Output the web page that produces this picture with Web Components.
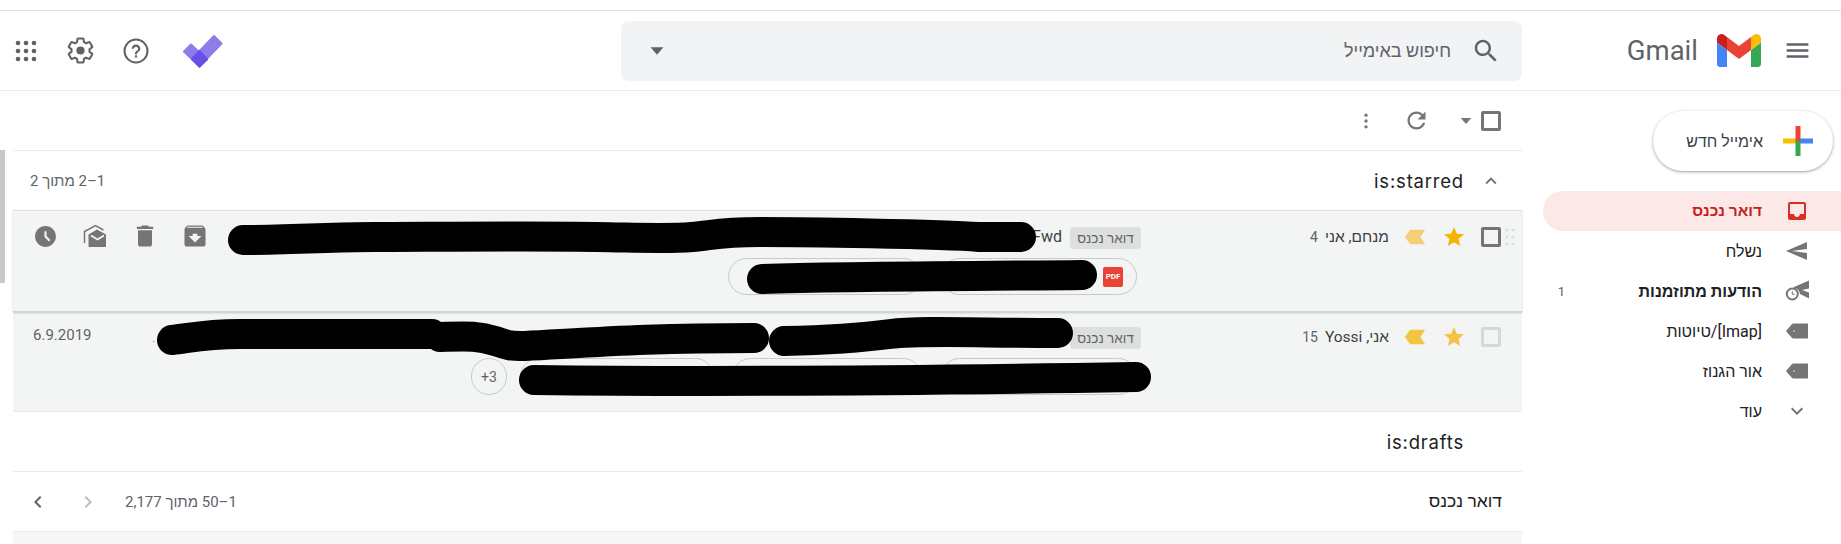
<!DOCTYPE html>
<html lang="he" dir="rtl">
<head>
<meta charset="utf-8">
<title>Gmail</title>
<style>
html,body{margin:0;padding:0;background:#fff;height:544px;overflow:hidden}
body{font-family:Roboto,"Liberation Sans",sans-serif;color:#202124}
</style>
</head>
<body>
<gm-app>
  <gm-header slot="header"></gm-header>
  <gm-sidebar slot="side">
    <gm-nav-item icon="inbox" active>דואר נכנס</gm-nav-item>
    <gm-nav-item icon="sent">נשלח</gm-nav-item>
    <gm-nav-item icon="scheduled" bold count="1">הודעות מתוזמנות</gm-nav-item>
    <gm-nav-item icon="label">[Imap]/טיוטות</gm-nav-item>
    <gm-nav-item icon="label">אור הגנוז</gm-nav-item>
    <gm-nav-item icon="down">עוד</gm-nav-item>
  </gm-sidebar>
  <gm-toolbar slot="main"></gm-toolbar>
  <gm-section slot="main" collapsible range="1–2 מתוך 2">is:starred</gm-section>
  <gm-mail-row slot="main" hover sender="מנחם, אני" count="4" subject="Fwd" mark="#f2cf78" star="#f4b400">
    <gm-row-actions slot="end"></gm-row-actions>
    <gm-chip w="196" pdf></gm-chip>
    <gm-chip w="194" gap="19"></gm-chip>
  </gm-mail-row>
  <gm-mail-row slot="main" dim sender="אני, Yossi" count="15" mark="#f4c542" star="#f6c244" tail=".">
    <span slot="end" class="date" style="font-size:15px;color:#5f6368;padding-left:20px;line-height:20px;position:relative;top:-3px">6.9.2019</span>
    <gm-chip w="196"></gm-chip>
    <gm-chip w="190" gap="19"></gm-chip>
    <gm-chip w="194" gap="18"></gm-chip>
    <gm-chip w="36" gap="13">+3</gm-chip>
  </gm-mail-row>
  <gm-section slot="main">is:drafts</gm-section>
  <gm-section slot="main" plain range="1–50 מתוך 2,177" pager>דואר נכנס</gm-section>
  <gm-redactions slot="over"></gm-redactions>
</gm-app>
<script>
const ICONS = {
  menu: '<path d="M3 18h18v-2H3v2zm0-5h18v-2H3v2zm0-7v2h18V6H3z"/>',
  search: '<path d="M15.5 14h-.79l-.28-.27C15.41 12.59 16 11.11 16 9.5 16 5.91 13.09 3 9.5 3S3 5.91 3 9.5 5.91 16 9.5 16c1.61 0 3.09-.59 4.23-1.57l.27.28v.79l5 4.99L20.49 19l-4.99-5zm-6 0C7.01 14 5 11.99 5 9.5S7.01 5 9.5 5 14 7.01 14 9.5 11.99 14 9.5 14z"/>',
  caret: '<path d="M5 8h14l-7 8z"/>',
  apps: '<circle cx="4" cy="4" r="2.3"/><circle cx="12" cy="4" r="2.3"/><circle cx="20" cy="4" r="2.3"/><circle cx="4" cy="12" r="2.3"/><circle cx="12" cy="12" r="2.3"/><circle cx="20" cy="12" r="2.3"/><circle cx="4" cy="20" r="2.3"/><circle cx="12" cy="20" r="2.3"/><circle cx="20" cy="20" r="2.3"/>',
  gear: '<path fill="none" stroke="currentColor" stroke-width="1.7" d="M19.43 12.98c.04-.32.07-.64.07-.98 0-.34-.03-.66-.07-.98l2.11-1.65c.19-.15.24-.42.12-.64l-2-3.46c-.12-.22-.39-.3-.61-.22l-2.49 1c-.52-.4-1.08-.73-1.69-.98l-.38-2.65C14.46 2.18 14.25 2 14 2h-4c-.25 0-.46.18-.49.42l-.38 2.65c-.61.25-1.17.59-1.69.98l-2.49-1c-.23-.09-.49 0-.61.22l-2 3.46c-.13.22-.07.49.12.64l2.11 1.65c-.04.32-.07.65-.07.98 0 .33.03.66.07.98l-2.11 1.65c-.19.15-.24.42-.12.64l2 3.46c.12.22.39.3.61.22l2.49-1c.52.4 1.08.73 1.69.98l.38 2.65c.03.24.24.42.49.42h4c.25 0 .46-.18.49-.42l.38-2.65c.61-.25 1.17-.59 1.69-.98l2.49 1c.23.09.49 0 .61-.22l2-3.46c.12-.22.07-.49-.12-.64l-2.11-1.65z"/><circle cx="12" cy="12" r="3.4"/>',
  help: '<circle cx="12" cy="12" r="10.6" fill="none" stroke="currentColor" stroke-width="1.9"/><path d="M11 18h2v-2h-2v2zm1-12c-2.21 0-4 1.79-4 4h2c0-1.1.9-2 2-2s2 .9 2 2c0 2-3 1.75-3 5h2c0-2.25 3-2.5 3-5 0-2.21-1.79-4-4-4z"/>',
  refresh: '<path d="M17.65 6.35C16.2 4.9 14.21 4 12 4c-4.42 0-7.99 3.58-7.99 8s3.57 8 7.99 8c3.73 0 6.84-2.55 7.73-6h-2.08c-.82 2.33-3.04 4-5.65 4-3.31 0-6-2.69-6-6s2.69-6 6-6c1.66 0 3.14.69 4.22 1.78L13 11h7V4l-2.35 2.35z"/>',
  kebab: '<circle cx="12" cy="5" r="2"/><circle cx="12" cy="12" r="2"/><circle cx="12" cy="19" r="2"/>',
  up: '<path d="M7.41 15.41 12 10.83l4.59 4.58L18 14l-6-6-6 6z"/>',
  down: '<path d="M7.41 8.59 12 13.17l4.59-4.58L18 10l-6 6-6-6z"/>',
  prev: '<path d="M15.41 7.41 14 6l-6 6 6 6 1.41-1.41L10.83 12z"/>',
  next: '<path d="M8.59 16.59 10 18l6-6-6-6-1.41 1.41L13.17 12z"/>',
  star: '<path d="M12 17.27 18.18 21l-1.64-7.03L22 9.24l-7.19-.61L12 2 9.19 8.63 2 9.24l5.46 4.73L5.82 21z"/>',
  mark: '<path d="M1 12 6.2 4.6C6.6 4.2 7 4 7.6 4H23l-5 8 5 8H7.6c-.6 0-1-.2-1.4-.6z"/>',
  clock: '<path d="M11.99 2C6.47 2 2 6.48 2 12s4.47 10 9.99 10C17.52 22 22 17.52 22 12S17.52 2 11.99 2zM15.3 16.7 11 12.4V7h2v4.6l3.7 3.7z"/>',
  read: '<path fill="none" stroke="currentColor" stroke-width="1.5" d="M1.500 19V7.500L12.500 1.500 20.500 6"/><path d="M5.500 10.500 14 5.500l9 5V22a1 1 0 0 1-1 1H6.500a1 1 0 0 1-1-1z"/><path fill="none" stroke="#f3f5f5" stroke-width="1.800" d="M8 11.500l6.500 4 6.500-4"/>',
  trash: '<path d="M6 19c0 1.100.9 2 2 2h8c1.100 0 2-.9 2-2V7H6v12zM19 4h-3.500l-1-1h-5l-1 1H5v2h14V4z"/>',
  archive: '<path d="M20.54 5.230l-1.390-1.680C18.880 3.210 18.470 3 18 3H6c-.47 0-.88.21-1.160.55L3.460 5.230C3.170 5.570 3 6.020 3 6.500V19c0 1.100.9 2 2 2h14c1.100 0 2-.9 2-2V6.500c0-.48-.17-.93-.46-1.270zM12 17.500 6.500 12H10v-2h4v2h3.500L12 17.500zM5.120 5l.81-1h12l.94 1H5.120z"/>',
  inbox: '<path d="M19 3H5c-1.100 0-2 .9-2 2v14c0 1.100.9 2 2 2h14c1.100 0 2-.9 2-2V5c0-1.100-.9-2-2-2zm0 12h-4c0 1.660-1.350 3-3 3s-3-1.340-3-3H5V5h14v10z"/>',
  sent: '<path transform="matrix(-1 0 0 1 24 0)" d="M2.010 21 23 12 2.010 3 2 10l15 2-15 2z"/>',
  scheduled: '<circle cx="7.300" cy="15" r="5.500" fill="none" stroke="currentColor" stroke-width="2"/><path d="M7.300 12v3.200h2.400" fill="none" stroke="currentColor" stroke-width="1"/><path d="M9 8 24 1.500v8l-7 1.500 7 2.500v6l-9-4.500C14.500 11.500 12.500 9.500 9 9.500z"/>',
  label: '<path d="M22 4.500H8.500c-.7 0-1.300.3-1.700.8L1 12l5.800 6.700c.4.500 1 .8 1.700.8H22c.6 0 1-.4 1-1v-13c0-.6-.4-1-1-1z"/><circle cx="9" cy="12" r=".7" fill="#fff"/>'
};

class GmIcon extends HTMLElement {
  connectedCallback() {
    const size = this.getAttribute("size") || 24;
    const c = this.getAttribute("color") || "#5f6368";
    this.attachShadow({ mode: "open" }).innerHTML = `
<style>:host{display:inline-flex;flex:none;width:${size}px;height:${size}px;color:${c}}svg{display:block;width:100%;height:100%;fill:currentColor}</style>
<svg viewBox="0 0 24 24">${ICONS[this.getAttribute("name")] || ""}</svg>`;
  }
}

class GmCheck extends HTMLElement {
  constructor() {
    super();
    this.attachShadow({ mode: "open" }).innerHTML = `
<style>
:host{display:block;flex:none;box-sizing:border-box;width:20px;height:20px;border:3px solid #757575;border-radius:2px}
:host([dim]){border-color:#d6d9d9}
</style>`;
  }
}

const appTpl = document.createElement("template");
appTpl.innerHTML = `
<style>
:host{display:block;position:relative;padding-top:10px;width:1841px;height:534px;overflow:hidden}
.body{display:grid;grid-template-columns:319px 1509px 13px;height:453px}
.list{display:flex;flex-direction:column;min-width:0}
.tail{flex:1;background:#f5f7f7}
.gutter{padding-top:59px;direction:ltr}
.thumb{width:5px;height:133px;background:#c8c8c8}
</style>
<slot name="header"></slot>
<div class="body">
  <slot name="side"></slot>
  <div class="list"><slot name="main"></slot><div class="tail"></div></div>
  <div class="gutter"><div class="thumb"></div></div>
</div>
<slot name="over"></slot>`;
class GmApp extends HTMLElement {
  constructor() {
    super();
    this.attachShadow({ mode: "open" }).append(appTpl.content.cloneNode(true));
  }
}

const headerTpl = document.createElement("template");
headerTpl.innerHTML = `
<style>
:host{display:flex;align-items:center;height:79px;border-top:1px solid #e0e0e0;border-bottom:1px solid #ebebeb;background:#fff}
.brand{width:319px;box-sizing:border-box;padding-right:29px;display:flex;align-items:center;flex:none}
.logo{width:44px;height:33px;margin-right:22px;display:block;flex:none}
.word{font:400 27.5px Roboto,sans-serif;color:#5f6368;margin-right:19px}
.search{flex:none;width:901px;height:60px;border-radius:8px;background:#f1f3f4;display:flex;align-items:center;box-sizing:border-box;padding:0 21px 0 25px}
.ph{font:18px Roboto,"Liberation Sans",sans-serif;color:#5f6368;margin-right:20px;flex:1}
.actions{flex:1;display:flex;align-items:center;justify-content:flex-end;padding-left:14px}
.tasks{width:40px;height:34px;display:block;margin-left:34px}
gm-icon.help{margin-left:28px}
gm-icon.gear{margin-left:28px}
</style>
<div class="brand">
  <gm-icon name="menu" size="29"></gm-icon>
  <svg class="logo" viewBox="52 42 88 66">
    <path fill="#4285f4" d="M58 108h14V74L52 59v43c0 3.320 2.690 6 6 6"/>
    <path fill="#34a853" d="M120 108h14c3.320 0 6-2.690 6-6V59l-20 15"/>
    <path fill="#fbbc04" d="M120 48v26l20-15v-8c0-7.420-8.470-11.650-14.400-7.200"/>
    <path fill="#ea4335" d="M72 74V48l24 18 24-18v26L96 92"/>
    <path fill="#c5221f" d="M52 51v8l20 15V48l-5.600-4.200c-5.940-4.450-14.400-.22-14.400 7.200"/>
  </svg>
  <span class="word" dir="ltr">Gmail</span>
</div>
<div class="search">
  <gm-icon name="search" size="30"></gm-icon>
  <span class="ph">חיפוש באימייל</span>
  <gm-icon name="caret" size="22"></gm-icon>
</div>
<div class="actions">
  <svg class="tasks" viewBox="0 0 40 34">
    <path d="M1 17.500 8 10.500 24 25.500 16.500 32.500z" fill="#8f7bea" stroke="#8f7bea" stroke-width="2" stroke-linejoin="round"/>
    <path d="M31 2 38.500 9.500 16.500 32.500 9 25z" fill="#8f7bea" stroke="#8f7bea" stroke-width="2" stroke-linejoin="round"/>
    <path d="M16.500 17 24 25 16.500 32.500 9 25z" fill="#6a4fe6" stroke="#6a4fe6" stroke-width="2" stroke-linejoin="round"/>
  </svg>
  <gm-icon class="help" name="help" size="26"></gm-icon>
  <gm-icon class="gear" name="gear" size="29"></gm-icon>
  <gm-icon name="apps" size="24"></gm-icon>
</div>`;
class GmHeader extends HTMLElement {
  constructor() {
    super();
    this.attachShadow({ mode: "open" }).append(headerTpl.content.cloneNode(true));
  }
}

const sideTpl = document.createElement("template");
sideTpl.innerHTML = `
<style>
:host{display:block;padding-top:20px}
.compose{box-sizing:border-box;width:180px;height:60px;margin:0 8px 20px 0;border-radius:30px;background:#fff;display:flex;align-items:center;gap:20px;padding-right:20px;
  box-shadow:0 1px 2px rgba(60,64,67,.3),0 1px 3px 1px rgba(60,64,67,.15);font:16px Roboto,"Liberation Sans",sans-serif;color:#3c4043}
.plus{width:30px;height:30px;display:block;flex:none}
</style>
<div class="compose">
  <svg class="plus" viewBox="0 0 30 30">
    <rect x="0" y="12.500" width="15" height="5" fill="#fbbc04"/>
    <rect x="15" y="12.500" width="15" height="5" fill="#4285f4"/>
    <rect x="12.500" y="15" width="5" height="15" fill="#34a853"/>
    <rect x="12.500" y="0" width="5" height="15" fill="#ea4335"/>
  </svg>
  <span>אימייל חדש</span>
</div>
<slot></slot>`;
class GmSidebar extends HTMLElement {
  constructor() {
    super();
    this.attachShadow({ mode: "open" }).append(sideTpl.content.cloneNode(true));
  }
}

class GmNavItem extends HTMLElement {
  connectedCallback() {
    const name = this.getAttribute("icon");
    const count = this.getAttribute("count") || "";
    const active = this.hasAttribute("active");
    const col = active ? "#d93025" : "#757575";
    this.attachShadow({ mode: "open" }).innerHTML = `
<style>
:host{display:flex;align-items:center;height:40px;margin-left:21px;box-sizing:border-box;padding:0 32px 0 14px;border-radius:20px 0 0 20px;font:16px Roboto,"Liberation Sans",sans-serif;color:#202124}
:host([active]){background:#fce8e6;color:#c5221f;font-weight:700;font-size:15.500px}
:host([bold]){font-weight:700}
.ic{width:24px;display:flex;justify-content:center;margin-left:23px;flex:none}
.t{flex:1}
.n{font-size:13px;font-weight:400;color:#5f6368;width:8px}
</style>
<span class="ic"><gm-icon name="${name}" size="24" color="${col}"></gm-icon></span>
<span class="t"><slot></slot></span>
<span class="n">${count}</span>`;
  }
}

const barTpl = document.createElement("template");
barTpl.innerHTML = `
<style>
:host{display:flex;align-items:center;height:59px;border-bottom:1px solid #ebebeb;padding-right:21px;box-sizing:content-box}
gm-icon.c{margin-right:6px}
gm-icon.r{margin-right:27px}
gm-icon.k{margin-right:27px}
</style>
<gm-check></gm-check>
<gm-icon class="c" name="caret" size="18" color="#757575"></gm-icon>
<gm-icon class="r" name="refresh" size="27" color="#757575"></gm-icon>
<gm-icon class="k" name="kebab" size="20" color="#757575"></gm-icon>`;
class GmToolbar extends HTMLElement {
  constructor() {
    super();
    this.attachShadow({ mode: "open" }).append(barTpl.content.cloneNode(true));
  }
}

class GmSection extends HTMLElement {
  connectedCallback() {
    const range = this.getAttribute("range");
    const plain = this.hasAttribute("plain");
    const chev = this.hasAttribute("collapsible")
      ? '<gm-icon name="up" size="22" color="#757575"></gm-icon>'
      : '<span style="width:22px"></span>';
    const pager = this.hasAttribute("pager")
      ? '<gm-icon class="n" name="next" size="24" color="#bdbdbd"></gm-icon><gm-icon class="p" name="prev" size="24" color="#5f6368"></gm-icon>'
      : "";
    this.attachShadow({ mode: "open" }).innerHTML = `
<style>
:host{display:flex;align-items:center;height:59px;padding:0 20px 0 17px}
:host(:not([collapsible])){border-bottom:1px solid #ebebeb}
:host([pager]){padding-left:13px}
.t{font:400 18.500px Inter,Roboto,sans-serif;color:#202124;margin-right:16px;letter-spacing:.8px}
.t.plain{font:400 17.500px Roboto,"Liberation Sans",sans-serif;margin-right:0;letter-spacing:0}
.s{flex:1}
.r{font:15px Roboto,"Liberation Sans",sans-serif;color:#5f6368}
.n{margin-right:25px}
.p{margin-right:26px}
</style>
${plain ? "" : chev}
<span class="t ${plain ? "plain" : ""}" dir="auto"><slot></slot></span>
<span class="s"></span>
${range ? `<span class="r">${range}</span>` : ""}
${pager}`;
  }
}

class GmMailRow extends HTMLElement {
  connectedCallback() {
    const a = k => this.getAttribute(k) || "";
    const dim = this.hasAttribute("dim");
    const tail = a("tail");
    const dots = dim ? "" : `<svg width="10" height="20" viewBox="0 0 10 20" fill="#dcdfdf"><circle cx="2" cy="3" r="1.600"/><circle cx="8" cy="3" r="1.600"/><circle cx="2" cy="10" r="1.600"/><circle cx="8" cy="10" r="1.600"/><circle cx="2" cy="17" r="1.600"/><circle cx="8" cy="17" r="1.600"/></svg>`;
    this.attachShadow({ mode: "open" }).innerHTML = `
<style>
:host{display:block;background:#f3f5f5;box-sizing:border-box;height:100px;border-bottom:1px solid #e6e8e9}
:host([hover]){height:102px;border-top:1px solid #dadce0;border-bottom:1px solid #d0d3d5;box-shadow:0 1px 2px rgba(60,64,67,.25);position:relative;z-index:1;padding-top:1px}
.wrap{display:flex;padding:15px 7px 0 0;height:100%;box-sizing:border-box}
.cell{flex:none;height:22px;display:flex;align-items:center}
.drag{width:10px;margin-left:4px;align-items:flex-start}
.chk{margin-left:15px;align-items:flex-start}
.st{margin-left:16px;width:24px;height:20px;justify-content:center}
.mk{margin-left:15px;width:22px;height:20px;justify-content:center}
.from{width:248px;height:19px;font:15.500px Roboto,"Liberation Sans",sans-serif;color:#3c4043;white-space:nowrap}
.from b{font-weight:400;font-size:14px;color:#5f6368;margin-right:7px}
.mid{flex:1;min-width:0}
.line{display:flex;align-items:center;height:22px}
.tag{box-sizing:border-box;height:22px;width:71px;flex:none;background:#dddfdf;border-radius:4px;color:#5f6368;font:13.500px Roboto,"Liberation Sans",sans-serif;display:flex;align-items:center;justify-content:center}
.sub{font:16px Roboto,sans-serif;color:#3c4043;margin:0 8px 3px 0}
.grow{flex:1;font-size:10px;color:#5f6368;text-align:left;padding-left:61px}
.chips{display:flex;margin-top:9px;padding-right:4px}
</style>
<div class="wrap">
  <div class="cell drag">${dots}</div>
  <div class="cell chk"><gm-check ${dim ? "dim" : ""}></gm-check></div>
  <div class="cell st"><gm-icon name="star" size="24" color="${a("star")}"></gm-icon></div>
  <div class="cell mk"><gm-icon name="mark" size="22" color="${a("mark")}"></gm-icon></div>
  <div class="cell from"><span>${a("sender")}</span><b>${a("count")}</b></div>
  <div class="mid">
    <div class="line">
      <span class="tag">דואר נכנס</span>
      ${a("subject") ? `<span class="sub" dir="ltr">${a("subject")}</span>` : ""}
      <span class="grow">${tail}</span>
      <slot name="end"></slot>
    </div>
    <div class="chips"><slot></slot></div>
  </div>
</div>`;
  }
}

const actTpl = document.createElement("template");
actTpl.innerHTML = `
<style>
:host{display:flex;padding-left:7px;position:relative;top:-2px}
span{width:50px;display:flex;justify-content:center;align-items:center}
</style>
<span><gm-icon name="archive" size="28" color="#757575"></gm-icon></span>
<span><gm-icon name="trash" size="28" color="#757575"></gm-icon></span>
<span><gm-icon name="read" size="24" color="#757575"></gm-icon></span>
<span><gm-icon name="clock" size="25" color="#757575"></gm-icon></span>`;
class GmRowActions extends HTMLElement {
  constructor() {
    super();
    this.attachShadow({ mode: "open" }).append(actTpl.content.cloneNode(true));
  }
}

class GmChip extends HTMLElement {
  connectedCallback() {
    const pdf = this.hasAttribute("pdf")
      ? '<span style="width:20px;height:20px;margin-right:13px;background:#ea4335;border-radius:2px;color:#fff;font:700 8px Roboto,sans-serif;display:flex;align-items:center;justify-content:center" dir="ltr">PDF</span>'
      : "";
    this.attachShadow({ mode: "open" }).innerHTML = `
<style>
:host{display:flex;align-items:center;box-sizing:border-box;height:37px;width:${this.getAttribute("w")}px;margin-right:${this.getAttribute("gap") || 0}px;border:1px solid #c6cacd;border-radius:19px;font:14px Roboto,sans-serif;color:#5f6368;flex:none}
.t{flex:1;text-align:center}
</style>
${pdf}<span class="t" dir="ltr"><slot></slot></span>`;
  }
}

const overTpl = document.createElement("template");
overTpl.innerHTML = `
<style>
:host{position:absolute;left:0;top:0;width:1841px;height:544px;pointer-events:none;z-index:5;direction:ltr}
svg{display:block}
path{fill:none;stroke:#000;stroke-width:30;stroke-linecap:round;stroke-linejoin:round}
</style>
<svg width="1841" height="544">
  <path d="M243 240C300 240 330 237 373 237S540 236 596 237 670 239 692 237 720 232 760 232 940 234 979 237L1021 237"/>
  <path d="M762 279C850 276 1000 276 1082 275"/>
  <path d="M172 340C190 338 205 334 240 334S400 334 432 334"/>
  <path d="M440 337C470 336 480 336 495 341S510 346 525 346C600 342 650 338 754 338"/>
  <path d="M784 341C830 340 860 338 890 334S980 333 1058 333"/>
  <path d="M534 380C700 382 950 380 1136 377"/>
</svg>`;
class GmRedactions extends HTMLElement {
  constructor() {
    super();
    this.attachShadow({ mode: "open" }).append(overTpl.content.cloneNode(true));
  }
}

customElements.define("gm-icon", GmIcon);
customElements.define("gm-check", GmCheck);
customElements.define("gm-header", GmHeader);
customElements.define("gm-sidebar", GmSidebar);
customElements.define("gm-nav-item", GmNavItem);
customElements.define("gm-toolbar", GmToolbar);
customElements.define("gm-section", GmSection);
customElements.define("gm-row-actions", GmRowActions);
customElements.define("gm-chip", GmChip);
customElements.define("gm-mail-row", GmMailRow);
customElements.define("gm-redactions", GmRedactions);
customElements.define("gm-app", GmApp);
</script>
</body>
</html>
